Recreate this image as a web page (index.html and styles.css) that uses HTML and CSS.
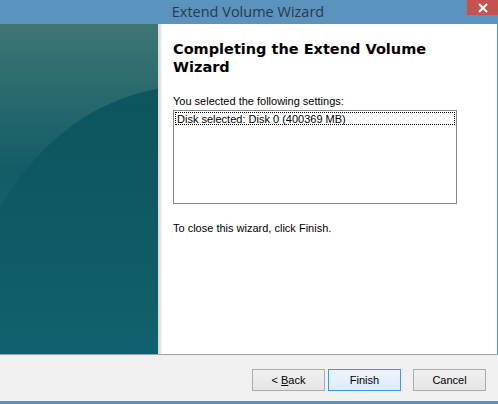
FILE: index.html
```html
<!DOCTYPE html>
<html>
<head>
<meta charset="utf-8">
<link rel="stylesheet" href="styles.css">
</head>
<body>
<div class="window">
  <div class="titlebar">
    <span class="title">Extend Volume Wizard</span>
    <div class="close"><svg width="12" height="10" viewBox="0 0 12 10"><path d="M2 1 L10 9 M10 1 L2 9" stroke="#fff" stroke-width="2.2"/></svg></div>
  </div>
  <div class="main">
    <div class="side"><div class="curve"></div></div>
    <div class="strip"></div>
    <div class="content">
      <h1 class="heading">Completing the Extend Volume Wizard</h1>
      <p class="label">You selected the following settings:</p>
      <div class="listbox">
        <div class="item">Disk selected: Disk 0 (400369 MB)</div>
      </div>
      <p class="close-note">To close this wizard, click Finish.</p>
    </div>
  </div>
  <div class="footer">
    <button class="btn">&lt; <u>B</u>ack</button>
    <button class="btn default">Finish</button>
    <button class="btn cancel">Cancel</button>
  </div>
</div>
</body>
</html>
```
FILE: styles.css
```css
html, body {
  margin: 0;
  padding: 0;
  background: #5b93bf;
}
.window {
  width: 498px;
  height: 404px;
  display: flex;
  flex-direction: column;
  background: #5b93bf;
  box-sizing: border-box;
  font-family: "Liberation Sans", Arial, sans-serif;
}
.titlebar {
  height: 24px;
  position: relative;
  display: flex;
  justify-content: center;
  align-items: center;
}
.title {
  font-family: "Open Sans", "Noto Sans", sans-serif;
  font-size: 14.5px;
  color: #2b3a47;
  margin-top: -2px;
  margin-left: -2px;
}
.close {
  position: absolute;
  right: 0;
  top: 0;
  width: 31px;
  height: 15px;
  background: #c75050;
  display: flex;
  align-items: center;
  justify-content: center;
}
.close svg { display: block; }
.main {
  height: 330px;
  display: flex;
  margin-right: 1px;
  background: #fff;
}
.side {
  width: 158px;
  position: relative;
  overflow: hidden;
  background: linear-gradient(180deg, #3f7674 0%, #2a6a6e 20%, #125c66 45%, #136677 75%, #147483 100%);
}
.curve {
  position: absolute;
  left: -40px;
  top: 62px;
  width: 460px;
  height: 560px;
  border-radius: 50%;
  background: linear-gradient(180deg, #0b535c 0%, #0f5d69 40%, #156a7a 80%, #146a7c 100%);
  opacity: 0.9;
}
.strip {
  width: 4px;
  background: linear-gradient(90deg, #d8d8d8, #e6e6e6 60%, #f4f4f4);
}
.content {
  flex: 1;
  padding: 16px 0 0 11px;
  font-size: 11px;
  color: #000;
}
.heading {
  margin: 0;
  font-family: "DejaVu Sans", Verdana, sans-serif;
  font-weight: bold;
  font-size: 14.5px;
  line-height: 18px;
  width: 290px;
  color: #000;
}
.label {
  margin: 19px 0 0 0;
  line-height: 13px;
}
.listbox {
  margin-top: 2px;
  width: 284px;
  height: 94px;
  box-sizing: border-box;
  border: 1px solid #828790;
  padding: 1px;
}
.item {
  border: 1px dotted #000;
  height: 13px;
  line-height: 12px;
  padding-left: 1px;
  box-sizing: border-box;
}
.close-note {
  margin: 18px 0 0 0;
  line-height: 13px;
}
.footer {
  height: 47px;
  background: #f0f0f0;
  border-top: 1px solid #a0a0a0;
  margin-bottom: 2px;
  display: flex;
  align-items: flex-start;
  padding: 14px 12px 0 0;
  justify-content: flex-end;
  box-sizing: border-box;
}
.btn {
  width: 73px;
  height: 22px;
  margin: 0 0 0 3px;
  padding: 0;
  border: 1px solid #acacac;
  background: linear-gradient(180deg, #f0f0f0, #e5e5e5);
  font-family: "Liberation Sans", Arial, sans-serif;
  font-size: 11px;
  color: #000;
}
.btn.default {
  border-color: #3399ff;
  background: linear-gradient(180deg, #ecf4fc, #dcecfc);
}
.btn.cancel {
  margin-left: 12px;
}
```
